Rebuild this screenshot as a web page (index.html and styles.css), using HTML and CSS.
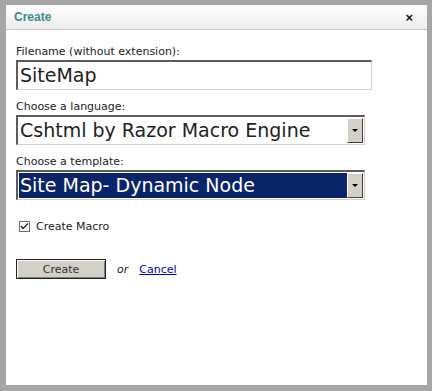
FILE: index.html
```html
<!DOCTYPE html>
<html lang="en">
<head>
    <meta charset="UTF-8">
    <title>Create</title>
    <link rel="stylesheet" href="styles.css">
</head>
<body>
    <div class="dialog">
        <div class="titlebar">
            <span class="title">Create</span>
            <span class="close">&#215;</span>
        </div>

        <div class="content">
            <div class="field">
                <label class="field-label">Filename (without extension):</label>
                <div class="textbox">SiteMap</div>
            </div>

            <div class="field">
                <label class="field-label">Choose a language:</label>
                <div class="dropdown">
                    <span class="dropdown-value">Cshtml by Razor Macro Engine</span>
                    <span class="dropdown-btn"><span class="arrow"></span></span>
                </div>
            </div>

            <div class="field">
                <label class="field-label">Choose a template:</label>
                <div class="dropdown">
                    <span class="dropdown-value selected">Site Map- Dynamic Node</span>
                    <span class="dropdown-btn"><span class="arrow"></span></span>
                </div>
            </div>

            <div class="check-row">
                <span class="checkbox">
                    <svg width="9" height="9" viewBox="0 0 9 9"><path d="M1 4 L3 6.5 L8 1.5" fill="none" stroke="#222" stroke-width="1.4"/></svg>
                </span>
                <span>Create Macro</span>
            </div>

            <div class="actions">
                <button class="btn">Create</button>
                <em class="or">or</em>
                <a href="#" class="cancel">Cancel</a>
            </div>
        </div>
    </div>
</body>
</html>
```

FILE: styles.css
```css
body {
    margin: 0;
    background-color: #a6a6a6;
    font-family: "DejaVu Sans", Verdana, sans-serif;
}

.dialog {
    margin: 5px 5px 0 6px;
    width: 421px;
    height: 380px;
    background: white;
}

.titlebar {
    height: 24px;
    display: flex;
    align-items: center;
    justify-content: space-between;
    padding: 0 14px 0 8px;
    background: linear-gradient(#ffffff, #ececec);
    border-bottom: 1px solid #c4c4c4;
}

.title {
    font-family: "Liberation Sans", Arial, sans-serif;
    font-size: 12px;
    font-weight: bold;
    color: #3c8c8c;
}

.close {
    font-family: "Liberation Sans", Arial, sans-serif;
    font-size: 13px;
    font-weight: bold;
    color: #111;
}

.content {
    padding: 14px 0 0 10px;
    font-size: 11px;
    color: #222;
}

.field {
    margin-bottom: 9px;
}

.field-label {
    display: block;
    height: 15px;
    line-height: 15px;
    margin-bottom: 1px;
}

.textbox {
    width: 351px;
    height: 27px;
    line-height: 27px;
    padding-left: 2px;
    font-size: 19px;
    border-top: 2px solid #5c5c5c;
    border-left: 2px solid #5c5c5c;
    border-right: 1px solid #d4d0c8;
    border-bottom: 1px solid #d4d0c8;
    color: #222;
}

.dropdown {
    width: 344px;
    height: 25px;
    display: flex;
    border-top: 2px solid #5c5c5c;
    border-left: 2px solid #5c5c5c;
    border-right: 1px solid #d4d0c8;
    border-bottom: 1px solid #d4d0c8;
    padding: 1px;
}

.dropdown-value {
    flex: 1;
    line-height: 25px;
    padding-left: 1px;
    font-size: 19px;
    color: #222;
    white-space: nowrap;
    overflow: hidden;
}

.dropdown-value.selected {
    background-color: #0a246a;
    color: white;
}

.dropdown-btn {
    width: 14px;
    display: flex;
    align-items: center;
    justify-content: center;
    background: #d4d0c8;
    border-top: 1px solid #fff;
    border-left: 1px solid #fff;
    border-right: 1px solid #404040;
    border-bottom: 1px solid #404040;
}

.arrow {
    width: 0;
    height: 0;
    border-left: 3px solid transparent;
    border-right: 3px solid transparent;
    border-top: 3px solid #000;
}

.check-row {
    display: flex;
    align-items: center;
    gap: 6px;
    margin: 20px 0 0 3px;
}

.checkbox {
    width: 9px;
    height: 9px;
    display: flex;
    border: 1px solid #707070;
    background: #fff;
}

.actions {
    display: flex;
    align-items: center;
    margin-top: 26px;
}

.btn {
    width: 90px;
    height: 20px;
    padding: 0;
    font-family: "DejaVu Sans", Verdana, sans-serif;
    font-size: 11px;
    color: #333;
    background-color: #d4d0c8;
    border: 1px solid #222;
    box-shadow: inset 1px 1px #fff, inset -1px -1px #808080;
}

.or {
    margin-left: 11px;
    color: #222;
}

.cancel {
    margin-left: 11px;
    color: #0000cc;
}
```
